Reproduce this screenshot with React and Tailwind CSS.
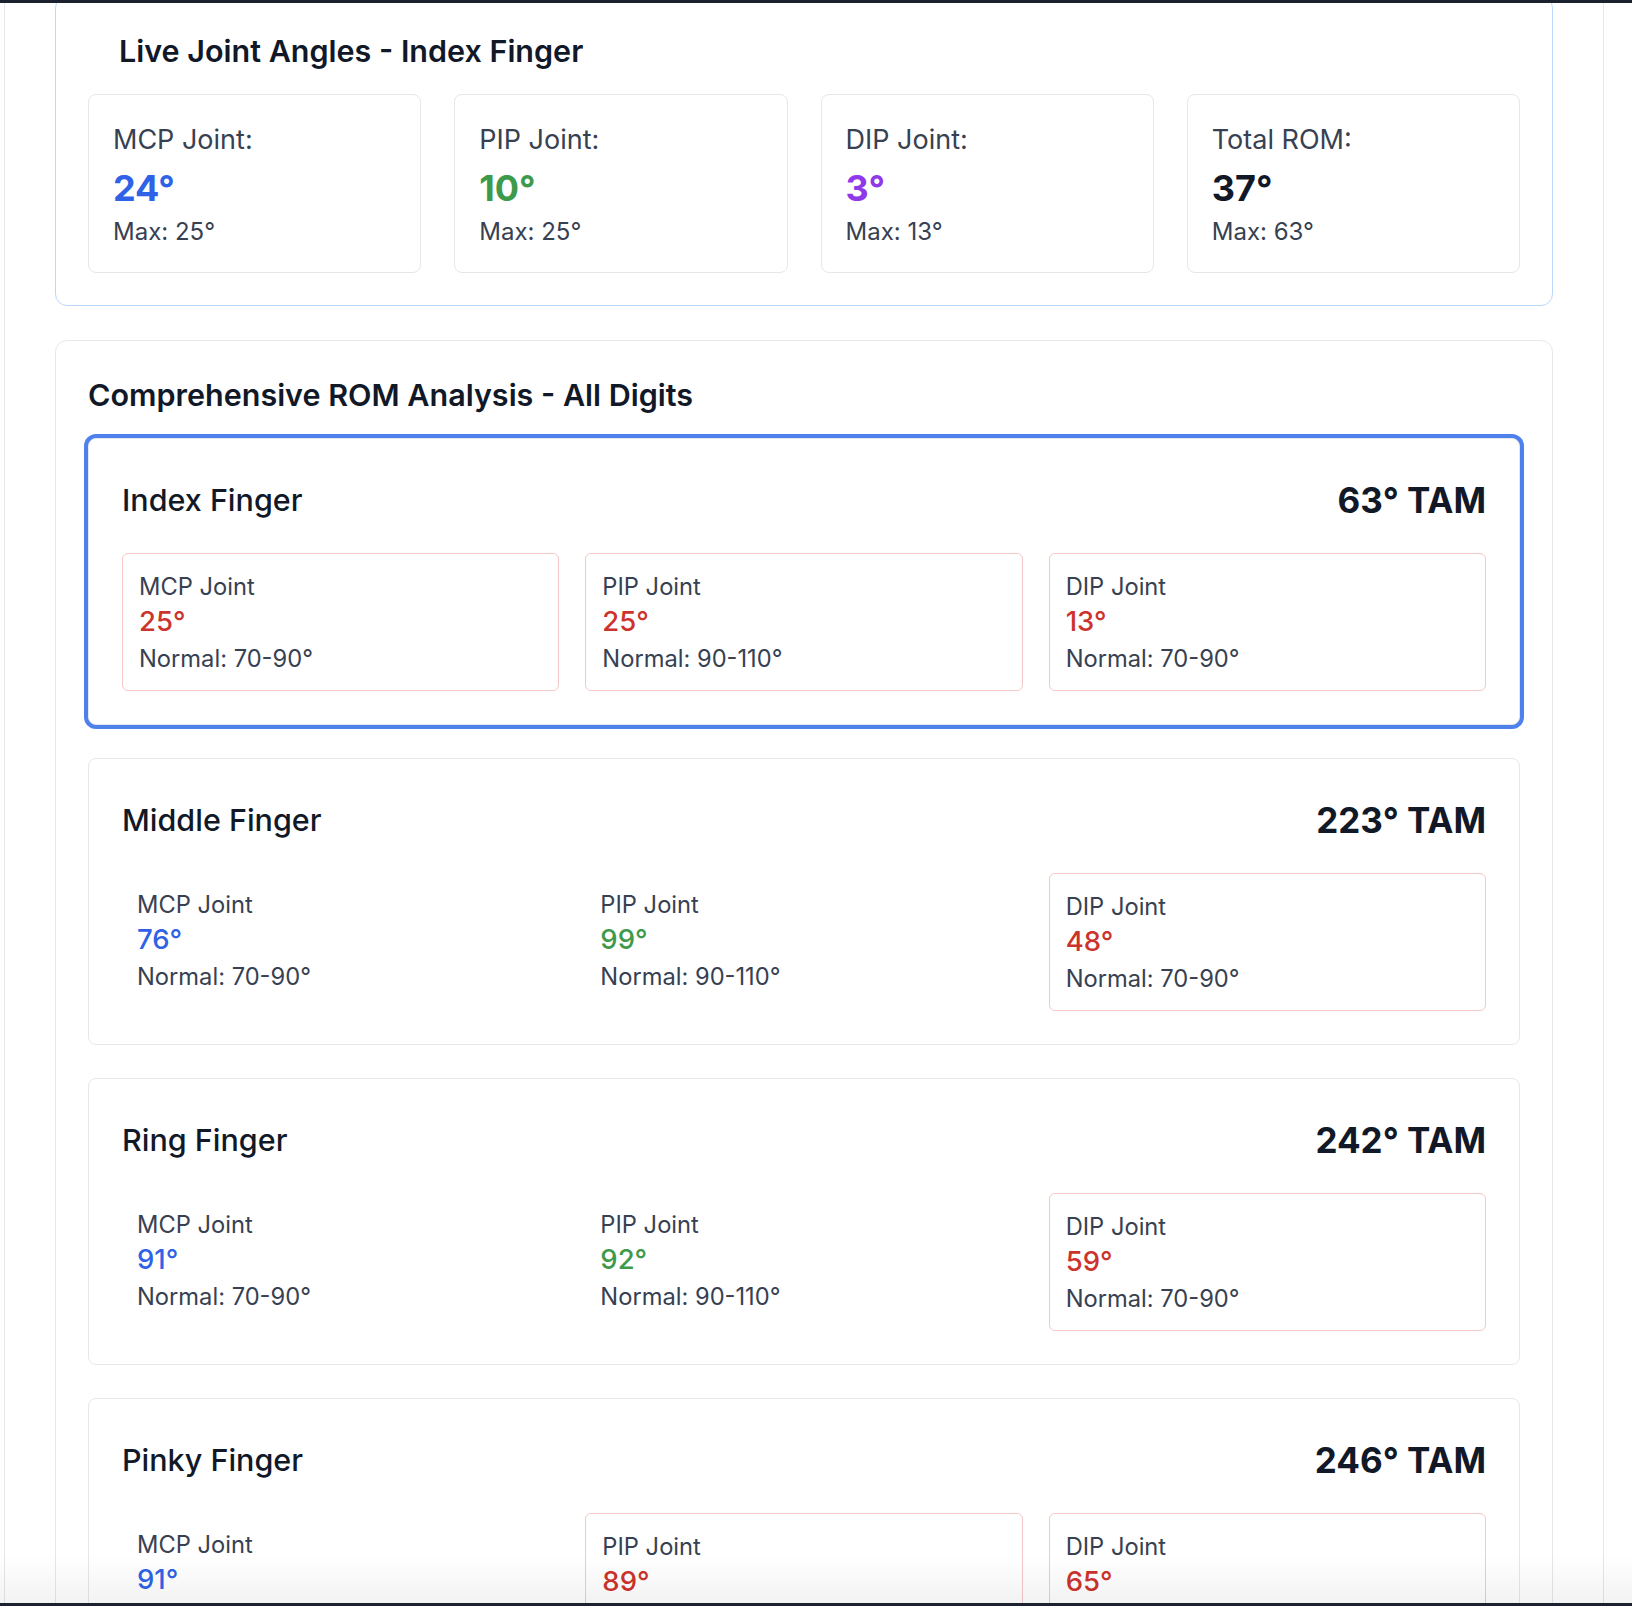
import React from 'react';

const liveAngles = [
  { label: 'MCP Joint:', value: '24°', max: '25°', color: 'text-[#2f62e6]' },
  { label: 'PIP Joint:', value: '10°', max: '25°', color: 'text-[#3d9a4a]' },
  { label: 'DIP Joint:', value: '3°', max: '13°', color: 'text-[#9039e8]' },
  { label: 'Total ROM:', value: '37°', max: '63°', color: 'text-[#111827]' },
];

const fingers = [
  {
    name: 'Index Finger',
    tam: 63,
    selected: true,
    joints: [
      { name: 'MCP Joint', value: 25, normal: '70-90°', tone: 'bad' },
      { name: 'PIP Joint', value: 25, normal: '90-110°', tone: 'bad' },
      { name: 'DIP Joint', value: 13, normal: '70-90°', tone: 'bad' },
    ],
  },
  {
    name: 'Middle Finger',
    tam: 223,
    joints: [
      { name: 'MCP Joint', value: 76, normal: '70-90°', tone: 'blue' },
      { name: 'PIP Joint', value: 99, normal: '90-110°', tone: 'green' },
      { name: 'DIP Joint', value: 48, normal: '70-90°', tone: 'bad' },
    ],
  },
  {
    name: 'Ring Finger',
    tam: 242,
    joints: [
      { name: 'MCP Joint', value: 91, normal: '70-90°', tone: 'blue' },
      { name: 'PIP Joint', value: 92, normal: '90-110°', tone: 'green' },
      { name: 'DIP Joint', value: 59, normal: '70-90°', tone: 'bad' },
    ],
  },
  {
    name: 'Pinky Finger',
    tam: 246,
    joints: [
      { name: 'MCP Joint', value: 91, normal: '70-90°', tone: 'blue' },
      { name: 'PIP Joint', value: 89, normal: '90-110°', tone: 'bad' },
      { name: 'DIP Joint', value: 65, normal: '70-90°', tone: 'bad' },
    ],
  },
];

const toneColor = {
  bad: 'text-[#cc332c]',
  blue: 'text-[#2f62e6]',
  green: 'text-[#3d9a4a]',
};

/**
 * Live reading tile in the top card
 */
const LiveTile = ({ item }) => (
  <div className="rounded-[8px] border border-[#e5e7eb] bg-white px-[24px] pt-[26px] pb-[24px]">
    <div className="text-[27px] leading-[38px] text-[#374151]">{item.label}</div>
    <div className={`mt-[5px] text-[36px] font-bold leading-[48px] ${item.color}`}>{item.value}</div>
    <div className="mt-[4px] text-[24px] leading-[32px] text-[#374151]">Max: {item.max}</div>
  </div>
);

/**
 * One joint reading inside a finger card; out-of-range ones get a red outline
 */
const JointBox = ({ joint }) => {
  const bad = joint.tone === 'bad';
  return (
    <div
      className={
        bad
          ? 'rounded-[6px] border border-[#f6c8c8] px-4 pt-[17px] pb-[14px]'
          : 'px-[15px] pt-[16px] pb-[16px]'
      }
    >
      <div className="text-[23.7px] leading-[32px] text-[#374151]">{joint.name}</div>
      <div className={`text-[27.5px] font-medium leading-[36px] ${toneColor[joint.tone]}`}>
        {joint.value}°
      </div>
      <div className="mt-[3px] text-[23.7px] leading-[34px] text-[#374151]">Normal: {joint.normal}</div>
    </div>
  );
};

const FingerCard = ({ finger }) => (
  <div
    className={`rounded-[8px] border border-[#e5e7eb] bg-white p-[33px] ${
      finger.selected ? 'ring-4 ring-[#4f81ec]' : ''
    }`}
  >
    <div className="mb-[25px] flex h-[56px] items-center justify-between">
      <h3 className="text-[30.5px] font-medium text-[#111827]">{finger.name}</h3>
      <div className="text-[35px] font-bold text-[#111827]">{finger.tam}° TAM</div>
    </div>
    <div className="grid grid-cols-3 items-start gap-[26px]">
      {finger.joints.map((joint) => (
        <JointBox key={joint.name} joint={joint} />
      ))}
    </div>
  </div>
);

export default function App() {
  return (
    <div className="relative h-[1606px] overflow-hidden bg-white font-['Inter','Noto_Sans',sans-serif]">
      <div className="absolute inset-x-0 top-0 z-10 h-[3px] bg-[#1c2130]" />

      <div className="ml-[4px] flex h-full w-[1600px] flex-col border-x border-[#e5e7eb] bg-white px-[50px]">
        {/* live angles */}
        <section className="-mt-[4px] rounded-[12px] border border-[#bcd7fc] bg-white p-[32px]">
          <h2 className="mt-[2px] mb-[23px] pl-[31px] text-[30.5px] font-semibold leading-[40px] text-[#111827]">
            Live Joint Angles - Index Finger
          </h2>
          <div className="grid grid-cols-4 gap-[33px]">
            {liveAngles.map((item) => (
              <LiveTile key={item.label} item={item} />
            ))}
          </div>
        </section>

        {/* all digits */}
        <section className="mt-[34px] rounded-[12px] border border-[#e5e7eb] bg-white px-[32px] pt-[34px] pb-[32px]">
          <h2 className="mb-[23px] text-[30.5px] font-semibold leading-[40px] text-[#111827]">
            Comprehensive ROM Analysis - All Digits
          </h2>
          <div className="flex flex-col gap-[33px]">
            {fingers.map((finger) => (
              <FingerCard key={finger.name} finger={finger} />
            ))}
          </div>
        </section>
      </div>

      <div className="pointer-events-none absolute inset-x-0 bottom-[3px] h-[48px] bg-linear-to-b from-transparent to-black/[0.05]" />
      <div className="absolute inset-x-0 bottom-0 z-10 h-[3px] bg-[#1c2130]" />
    </div>
  );
}
